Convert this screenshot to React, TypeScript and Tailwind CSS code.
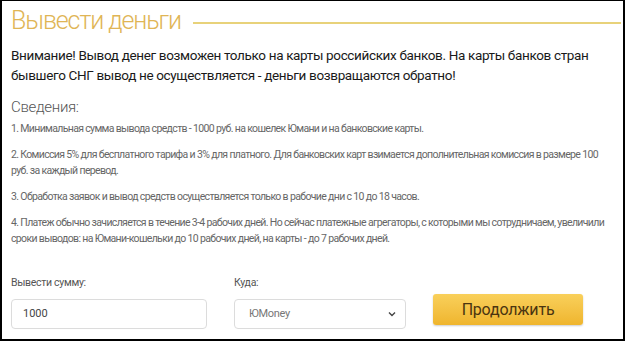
import React from 'react';

const items = [
  '1. Минимальная сумма вывода средств - 1000 руб. на кошелек Юмани и на банковские карты.',
  '2. Комиссия 5% для бесплатного тарифа и 3% для платного. Для банковских карт взимается дополнительная комиссия в размере 100 руб. за каждый перевод.',
  '3. Обработка заявок и вывод средств осуществляется только в рабочие дни с 10 до 18 часов.',
  '4. Платеж обычно зачисляется в течение 3-4 рабочих дней. Но сейчас платежные агрегаторы, с которыми мы сотрудничаем, увеличили сроки выводов: на Юмани-кошельки до 10 рабочих дней, на карты - до 7 рабочих дней.',
];

export default function App() {
  return (
    <div className="w-[625px] h-[341px] bg-black p-[1px_2px_2px_2px] font-['Roboto',sans-serif]">
      <div className="h-full bg-white pl-[9px] pr-[2px] pt-[3px]">
        {/* Title */}
        <div className="flex items-center gap-[12px]">
          <h1 className="text-[25px] leading-[34px] font-light tracking-[-1.1px] text-[#e0b555] whitespace-nowrap">
            Вывести деньги
          </h1>
          <div className="flex-1 h-[2px] bg-[#e8d27a] mt-[3px]"></div>
        </div>

        {/* Warning */}
        <p className="mt-[7px] pr-[10px] text-[13.5px] leading-[20px] tracking-[-0.35px] text-[#1a1a1a]">
          Внимание! Вывод денег возможен только на карты российских банков. На карты банков стран бывшего СНГ вывод не осуществляется - деньги возвращаются обратно!
        </p>

        {/* Info */}
        <div className="mt-[12px] pr-[11px]">
          <h2 className="text-[15px] leading-[20px] font-light tracking-[-0.3px] text-[#555]">Сведения:</h2>
          <div className="mt-[4px] space-y-[10px]">
            {items.map((t) => (
              <p key={t} className="text-[10.5px] leading-[16px] tracking-[-0.65px] text-[#666]">{t}</p>
            ))}
          </div>
        </div>

        {/* Form */}
        <div className="mt-[29px] flex items-end">
          <div className="w-[196px]">
            <label className="block text-[10.5px] leading-[14px] tracking-[-0.3px] text-[#555] mb-[9px]">Вывести сумму:</label>
            <div className="h-[30px] rounded-[4px] border border-[#dcdcdc] flex items-center px-[11px] text-[11px] text-[#444]">
              1000
            </div>
          </div>
          <div className="w-[172px] ml-[27px]">
            <label className="block text-[10.5px] leading-[14px] tracking-[-0.3px] text-[#555] mb-[9px]">Куда:</label>
            <div className="h-[30px] rounded-[4px] border border-[#dcdcdc] flex items-center justify-between px-[14px] pr-[9px] text-[11px] tracking-[-0.3px] text-[#777]">
              <span>ЮMoney</span>
              <svg width="8" height="6" viewBox="0 0 8 6" fill="none">
                <path d="M1 1.5 4 4.5 7 1.5" stroke="#444" strokeWidth="1.4" />
              </svg>
            </div>
          </div>
          <button className="ml-[27px] mb-[4px] w-[150px] h-[31px] rounded-[3px] bg-gradient-to-b from-[#f9d05a] to-[#efb52c] shadow-[0_1px_2px_rgba(0,0,0,0.2)] text-[16px] tracking-[-0.2px] text-[#4a3410]">
            Продолжить
          </button>
        </div>
      </div>
    </div>
  );
}
